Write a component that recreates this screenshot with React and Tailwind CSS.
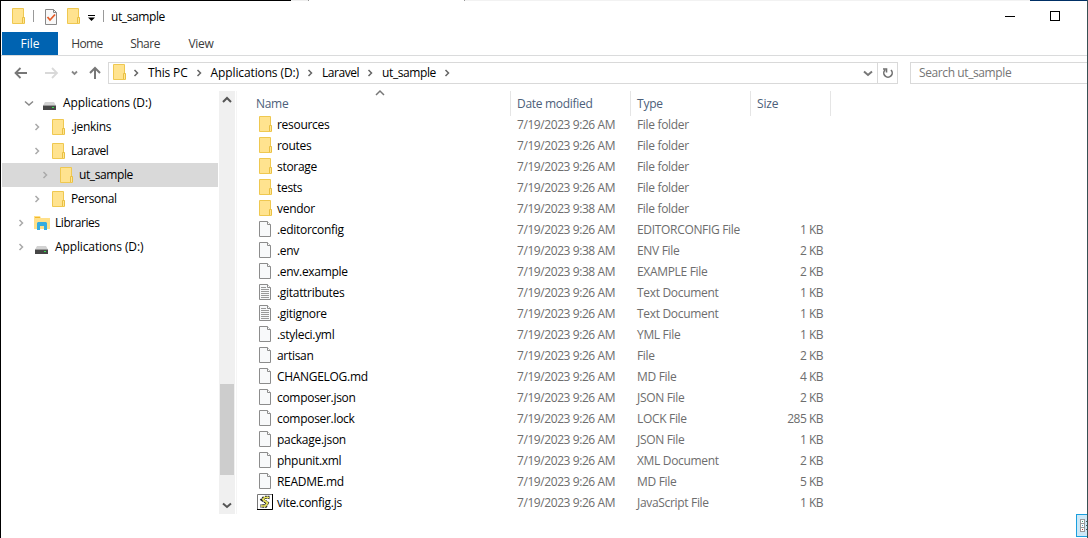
const files = [
  ["resources", "7/19/2023 9:26 AM", "File folder", "", "folder"],
  ["routes", "7/19/2023 9:26 AM", "File folder", "", "folder"],
  ["storage", "7/19/2023 9:26 AM", "File folder", "", "folder"],
  ["tests", "7/19/2023 9:26 AM", "File folder", "", "folder"],
  ["vendor", "7/19/2023 9:38 AM", "File folder", "", "folder"],
  [".editorconfig", "7/19/2023 9:26 AM", "EDITORCONFIG File", "1 KB", "file"],
  [".env", "7/19/2023 9:38 AM", "ENV File", "2 KB", "file"],
  [".env.example", "7/19/2023 9:38 AM", "EXAMPLE File", "2 KB", "file"],
  [".gitattributes", "7/19/2023 9:26 AM", "Text Document", "1 KB", "text"],
  [".gitignore", "7/19/2023 9:26 AM", "Text Document", "1 KB", "text"],
  [".styleci.yml", "7/19/2023 9:26 AM", "YML File", "1 KB", "file"],
  ["artisan", "7/19/2023 9:26 AM", "File", "2 KB", "file"],
  ["CHANGELOG.md", "7/19/2023 9:26 AM", "MD File", "4 KB", "file"],
  ["composer.json", "7/19/2023 9:26 AM", "JSON File", "2 KB", "file"],
  ["composer.lock", "7/19/2023 9:26 AM", "LOCK File", "285 KB", "file"],
  ["package.json", "7/19/2023 9:26 AM", "JSON File", "1 KB", "file"],
  ["phpunit.xml", "7/19/2023 9:26 AM", "XML Document", "2 KB", "file"],
  ["README.md", "7/19/2023 9:26 AM", "MD File", "5 KB", "file"],
  ["vite.config.js", "7/19/2023 9:26 AM", "JavaScript File", "1 KB", "script"],
];

// indent is the left padding before the arrow
const tree = [
  { name: "Applications (D:)", icon: "drive", indent: "pl-[19px]", tracking: "tracking-[-0.12px]", open: true },
  { name: ".jenkins", icon: "folder", indent: "pl-[27px]", tracking: "tracking-[-0.3px]" },
  { name: "Laravel", icon: "folder", indent: "pl-[27px]", tracking: "tracking-[-0.4px]" },
  { name: "ut_sample", icon: "folder", indent: "pl-[35px]", tracking: "tracking-[-0.4px]", selected: true },
  { name: "Personal", icon: "folder", indent: "pl-[27px]", tracking: "tracking-[-0.4px]" },
  { name: "Libraries", icon: "library", indent: "pl-[11px]", tracking: "tracking-[-0.45px]" },
  { name: "Applications (D:)", icon: "drive", indent: "pl-[11px]", tracking: "tracking-[-0.12px]" },
];

function Folder() {
  return (
    <svg width="16" height="16" viewBox="0 0 16 16" className="shrink-0">
      <path d="M2.5.5h11v9.5h1v5.5h-12z" fill="#ffe38f" stroke="#efc850" />
      <path d="M12.5 15V9.5h2V15" fill="#ffe793" stroke="#e9bf43" />
    </svg>
  );
}

function Page({ lines }) {
  return (
    <svg width="16" height="16" viewBox="0 0 16 16" className="shrink-0">
      <path d="M2.5.5h8l3 3v12h-11z" fill="#f8f9fa" stroke="#8c8c8c" />
      <path d="M10.5.5v3h3" fill="#fff" stroke="#8c8c8c" />
      {lines && (
        <path d="M4 3.5h5M4 5.5h8M4 7.5h8M4 9.5h8M4 11.5h8M4 13.5h8" stroke="#999" />
      )}
    </svg>
  );
}

function Script() {
  return (
    <svg width="16" height="16" viewBox="0 0 16 16" className="shrink-0">
      <path d="M.5.5h15v15H.5z" fill="#fff" stroke="#777" />
      <path d="M15.5 0v15.5H0" fill="none" stroke="#000" />
      <path d="M12.5 3.5H7.5L5.5 5.5L10 9L8.5 12H3.5" fill="none" stroke="#222" strokeWidth="3.6" strokeDasharray="2 .6" />
      <path d="M12 3.5H7.5L6 5.5L10.500 9L8.500 12H4" fill="none" stroke="#e9e45b" strokeWidth="1.6" />
      <path d="M8 5.500h4M5 8l3 2" stroke="#fff" />
    </svg>
  );
}

function Drive() {
  return (
    <svg width="16" height="16" viewBox="0 0 16 16" className="shrink-0">
      <path d="M3 7h9l2 3.5H1z" fill="#d2d2d2" />
      <path d="M1 10.5h13V15H1z" fill="#464646" />
      <path d="M10 12.5h2" stroke="#35e04d" />
    </svg>
  );
}

function Library() {
  return (
    <svg width="16" height="16" viewBox="0 0 16 16" className="shrink-0">
      <path d="M0 1h6l1 2h9v11H0z" fill="#ffe08a" />
      <path d="M1 2.5h5" stroke="#f2b92c" />
      <path d="M3 15V8l1-1h8l1 1v7h-3v-4H6v4z" fill="#35ace0" />
    </svg>
  );
}

function Icon({ type }) {
  if (type === "folder") return <Folder />;
  if (type === "drive") return <Drive />;
  if (type === "library") return <Library />;
  if (type === "script") return <Script />;
  return <Page lines={type === "text"} />;
}

function Chevron({ dir = "right", bold = false, className = "" }) {
  const paths = {
    right: "M6.500 5l3 3L6.500 11",
    down: "M4 6.500l4 3.500l4-3.500",
    up: "M4 10l4-4l4 4",
  };
  return (
    <svg width="16" height="16" viewBox="0 0 16 16" className={`shrink-0 ${className}`}>
      <path d={paths[dir]} fill="none" stroke="currentColor" strokeWidth={bold ? 2 : 1.5} />
    </svg>
  );
}

function TitleBar() {
  return (
    <div className="mb-px flex h-[30px] items-center pl-[9px] pr-[27px]">
      <Folder />
      <div className="ml-[7px] h-3 w-px bg-[#999]" />
      <svg width="14" height="16" viewBox="0 0 14 16" className="ml-[11px] mt-[2px]">
        <path d="M.5.5h8l3 3v12H.5z" fill="#f8f8f8" stroke="#888" />
        <path d="M8.5.5v3h3" fill="none" stroke="#888" />
        <path d="M2.500 8l2.500 3L10 5.500" fill="none" stroke="#e45c28" strokeWidth="1.8" />
      </svg>
      <div className="ml-[6px]"><Folder /></div>
      <svg width="7" height="6" viewBox="0 0 7 6" className="ml-[7px] mt-1">
        <path d="M0 .5h7" stroke="#000" />
        <path d="M0 2.500h7L3.500 6z" />
      </svg>
      <div className="ml-2 h-3 w-px bg-[#999]" />
      <span className="ml-[7px] mt-[2px] tracking-[-0.4px]">ut_sample</span>
      <div className="ml-auto h-px w-[10px] bg-black" />
      <div className="ml-[35px] h-[10px] w-[10px] border border-black" />
    </div>
  );
}

function Ribbon() {
  return (
    <div className="flex h-6 border-b border-[#dadbdc] pl-px text-[#3b3b3b]">
      <div className="flex w-14 items-center justify-center bg-[#0063b1] pt-px text-white">File</div>
      <div className="flex w-[58px] items-center justify-center pt-px tracking-[-0.6px]">Home</div>
      <div className="flex w-[58px] items-center justify-center pt-px tracking-[-0.5px]">Share</div>
      <div className="flex w-[54px] items-center justify-center pt-px tracking-[-0.3px]">View</div>
    </div>
  );
}

function AddressBar() {
  return (
    <div className="mt-[6px] flex h-[22px] items-center">
      <svg width="107" height="22" viewBox="0 0 107 22" fill="none" className="shrink-0">
        <path d="M26 11H14.500M19.500 6l-5 5l5 5" stroke="#777" strokeWidth="1.800" />
        <path d="M44 11h12M51 6l5 5l-5 5" stroke="#d9d9d9" strokeWidth="1.800" />
        <path d="M71 9.500l2.500 2.500l2.500-2.500" stroke="#888" strokeWidth="1.800" />
        <path d="M94 17V6M89 11l5-5l5 5" stroke="#777" strokeWidth="2" />
      </svg>
      <div className="flex h-[22px] w-[790px] shrink-0 items-center border border-[#d9d9d9]">
        <div className="-mt-[2px] ml-[2px]"><Folder /></div>
        <Chevron className="ml-[1px] text-[#666]" />
        <span className="ml-1 tracking-[-0.15px]">This PC</span>
        <Chevron className="ml-[3px] text-[#666]" />
        <span className="ml-1 tracking-[-0.12px]">Applications (D:)</span>
        <Chevron className="ml-[3px] text-[#666]" />
        <span className="ml-1 tracking-[-0.45px]">Laravel</span>
        <Chevron className="ml-[3px] text-[#666]" />
        <span className="ml-1 tracking-[-0.4px]">ut_sample</span>
        <Chevron className="ml-[3px] text-[#666]" />
        <Chevron dir="down" bold className="ml-auto text-[#777]" />
        <div className="ml-px flex h-full w-5 items-center justify-center border-l border-[#d9d9d9]">
          <svg width="12" height="12" viewBox="0 0 12 12" fill="none">
            <path d="M3 3a4.200 4.200 0 1 0 6 0M1 2h3.500V5.500" stroke="#707070" strokeWidth="1.6" />
          </svg>
        </div>
      </div>
      <div className="ml-3 flex h-[22px] grow items-center border border-r-0 border-[#d9d9d9] pl-2 tracking-[-0.4px] text-[#757575]">
        Search ut_sample
      </div>
    </div>
  );
}

function Sidebar() {
  return (
    <div className="flex h-[423px] w-[236px] shrink-0 border-r border-[#f5f5f5]">
      <div className="w-[217px] pl-px">
        {tree.map((item, i) => (
          <div
            key={i}
            className={`flex h-6 items-center ${item.indent} ${item.selected ? "bg-[#d9d9d9]" : ""}`}
          >
            <Chevron dir={item.open ? "down" : "right"} className={item.open ? "text-[#888]" : "text-[#aaa]"} />
            <div className="ml-[5px]"><Icon type={item.icon} /></div>
            <span className={`ml-[5px] ${item.tracking}`}>{item.name}</span>
          </div>
        ))}
      </div>
      <div className="ml-px flex w-4 flex-col items-center bg-[#f0f0f0]">
        <Chevron dir="up" bold className="mt-[1px] -ml-px text-[#555]" />
        <div className="mt-[276px] h-[91px] w-[14px] bg-[#cdcdcd]" />
        <Chevron dir="down" bold className="mt-[22px] -ml-px text-[#555]" />
      </div>
    </div>
  );
}

function FileList() {
  return (
    <div className="grow pl-[18px]">
      <div className="flex h-[25px] text-[#4c607a]">
        <div className="flex w-[256px] justify-between border-r border-[#e5e5e5] pl-[1px] pt-[5px]">
          <span className="tracking-[-0.3px]">Name</span>
          <Chevron dir="up" className="-mt-[11px] mr-[122px] text-[#777]" />
        </div>
        <div className="w-[120px] border-r border-[#e5e5e5] pl-[6px] pt-[5px] tracking-[-0.3px]">Date modified</div>
        <div className="w-[120px] border-r border-[#e5e5e5] pl-[6px] pt-[5px] tracking-[-0.2px]">Type</div>
        <div className="w-[80px] border-r border-[#e5e5e5] pl-[6px] pt-[5px] tracking-[-0.2px]">Size</div>
      </div>
      <div className="-mt-[2px]">
        {files.map(([name, date, type, size, icon]) => (
          <div key={name} className="flex h-[21px] items-start pt-[3px] text-[#6d6d6d]">
            <div className="flex w-[262px] pl-[2px] text-black">
              <div className="-mt-px"><Icon type={icon} /></div>
              <span className="ml-1 tracking-[-0.3px]">{name}</span>
            </div>
            <span className="w-[120px] tracking-[-0.42px]">{date}</span>
            <span className="w-[120px] tracking-[-0.32px]">{type}</span>
            <span className="w-[66px] text-right tracking-[-0.5px]">{size}</span>
          </div>
        ))}
      </div>
    </div>
  );
}

function App() {
  return (
    <div className="relative h-[538px] w-[1088px] overflow-hidden border-l border-r border-l-black border-r-[#385154] bg-white font-['Open_Sans','Noto_Sans',sans-serif] text-[12px] leading-4 whitespace-nowrap text-black">
      <div className="flex h-px">
        <div className="w-[290px] bg-black" />
        <div className="w-[17px] bg-[#eee]" />
        <div className="w-px bg-[#999]" />
        <div className="w-[155px]" />
        <div className="w-px bg-[#999]" />
        <div className="grow bg-[#f2f2f2]" />
        <div className="w-[57px] bg-[#002f65]" />
      </div>
      <TitleBar />
      <Ribbon />
      <AddressBar />
      <div className="mt-[7px] flex">
        <Sidebar />
        <FileList />
      </div>
      {/* gap in the left window edge */}
      <div className="absolute top-[136px] -left-px h-[30px] w-px bg-white" />
      {/* view mode button, clipped by the window edge */}
      <div className="absolute top-[514px] left-[1075px] flex h-[23px] w-[24px] items-start border border-[#1a9fde] bg-[#cce8f7] pt-1 pl-[3px]">
        <svg width="16" height="13" viewBox="0 0 16 13" shapeRendering="crispEdges">
          <path d="M.5.5h4v4h-4zM.5 4.5h4v4h-4zM.5 8.5h4v4h-4z" fill="#fff" stroke="#999" />
          <path d="M2 2h1v1H2z" fill="#497" />
          <path d="M2 6h1v1H2z" fill="#59c" />
          <path d="M2 10h1v1H2z" fill="#b33" />
          <path d="M6 2.5h6M6 6.5h6M6 10.5h6" stroke="#555" />
        </svg>
      </div>
    </div>
  );
}

export default App;
